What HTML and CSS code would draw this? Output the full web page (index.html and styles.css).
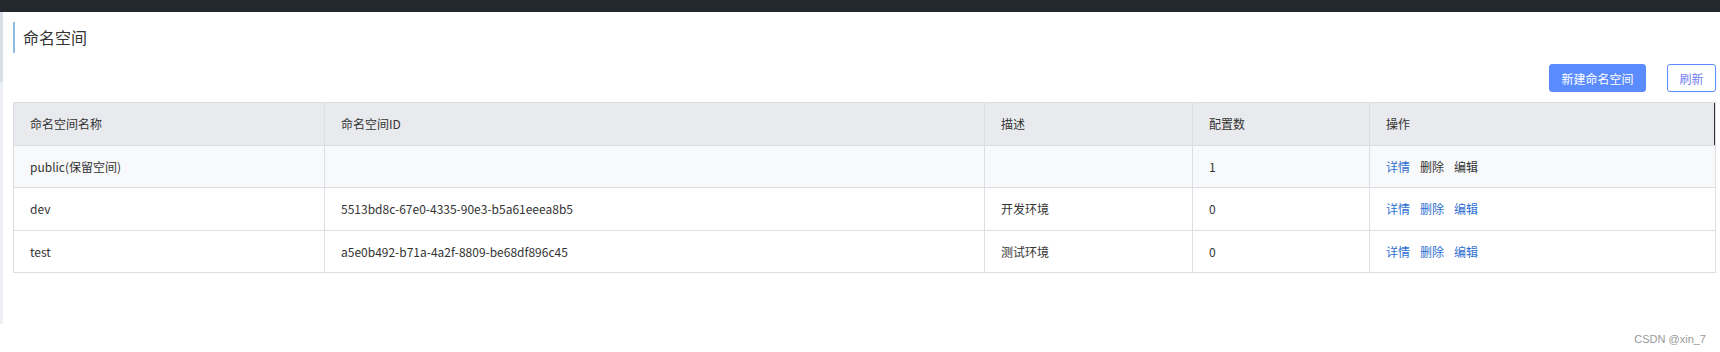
FILE: index.html
```html
<!DOCTYPE html>
<html>
<head>
  <link rel="stylesheet" href="styles.css">
</head>
<body>
  <div class="topbar"></div>
  <div class="main">
    <div class="scroll-strip">
      <div class="thumb"></div>
      <div class="track"></div>
    </div>
    <div class="content">
      <h2 class="page-title">命名空间</h2>
      <div class="toolbar">
        <button class="btn btn-primary">新建命名空间</button>
        <button class="btn btn-plain">刷新</button>
      </div>
      <table class="ns-table">
        <colgroup>
          <col style="width: 311px">
          <col style="width: 660px">
          <col style="width: 208px">
          <col style="width: 177px">
          <col>
        </colgroup>
        <thead>
          <tr>
            <th>命名空间名称</th>
            <th>命名空间ID</th>
            <th>描述</th>
            <th>配置数</th>
            <th class="last">操作</th>
          </tr>
        </thead>
        <tbody>
          <tr class="reserved">
            <td>public(保留空间)</td>
            <td></td>
            <td></td>
            <td>1</td>
            <td class="actions"><a class="link">详情</a><a class="link disabled">删除</a><a class="link disabled">编辑</a></td>
          </tr>
          <tr>
            <td>dev</td>
            <td>5513bd8c-67e0-4335-90e3-b5a61eeea8b5</td>
            <td>开发环境</td>
            <td>0</td>
            <td class="actions"><a class="link">详情</a><a class="link">删除</a><a class="link">编辑</a></td>
          </tr>
          <tr>
            <td>test</td>
            <td>a5e0b492-b71a-4a2f-8809-be68df896c45</td>
            <td>测试环境</td>
            <td>0</td>
            <td class="actions"><a class="link">详情</a><a class="link">删除</a><a class="link">编辑</a></td>
          </tr>
        </tbody>
      </table>
    </div>
  </div>
  <div class="watermark">CSDN @xin_7</div>
</body>
</html>
```

FILE: styles.css
```css
body {
  margin: 0;
  height: 352px;
  background-color: white;
  color: #333;
  font-family: "Noto Sans CJK SC", "Noto Sans", sans-serif;
  font-size: 12px;
  overflow: hidden;
}
.topbar {
  height: 12px;
  background-color: #24292e;
}
.main {
  display: flex;
}
.scroll-strip {
  width: 3px;
  display: flex;
  flex-direction: column;
}
.scroll-strip .thumb {
  height: 70px;
  background-color: #d9dfe6;
}
.scroll-strip .track {
  height: 242px;
  background-color: #eceff3;
}
.content {
  flex: 1;
  padding: 10px 4px 0 10px;
}
.page-title {
  margin: 0;
  height: 31px;
  line-height: 31px;
  padding-left: 8px;
  border-left: 2px solid #8dbbe6;
  font-size: 16px;
  font-weight: normal;
  color: #333;
}
.toolbar {
  display: flex;
  justify-content: flex-end;
  gap: 21px;
  margin-top: 11px;
}
.btn {
  height: 28px;
  padding: 0;
  font-family: inherit;
  font-size: 12px;
  border-radius: 3px;
  cursor: pointer;
}
.btn-primary {
  width: 97px;
  background-color: #5b8cff;
  border: 1px solid #5b8cff;
  color: white;
}
.btn-plain {
  width: 49px;
  background-color: white;
  border: 1px solid #5b8cff;
  color: #6f7ef2;
}
.ns-table {
  width: 100%;
  margin-top: 10px;
  border-collapse: collapse;
  table-layout: fixed;
  border: 1px solid #dcdee3;
}
.ns-table th,
.ns-table td {
  height: 41.5px;
  padding: 0 16px;
  border: 1px solid #dcdee3;
  text-align: left;
  font-weight: normal;
  white-space: nowrap;
}
.ns-table th {
  background-color: #e9eaee;
}
.ns-table th.last {
  box-shadow: inset -1px 0 0 #333;
}
.ns-table tr.reserved td {
  background-color: #f8f9fb;
}
.actions .link {
  margin-right: 10px;
  color: #2d6fd2;
  cursor: pointer;
}
.actions .link.disabled {
  color: #333;
}
.watermark {
  position: absolute;
  right: 14px;
  bottom: 7px;
  color: #999;
  font-family: "Liberation Sans", sans-serif;
  font-size: 11px;
}
```
